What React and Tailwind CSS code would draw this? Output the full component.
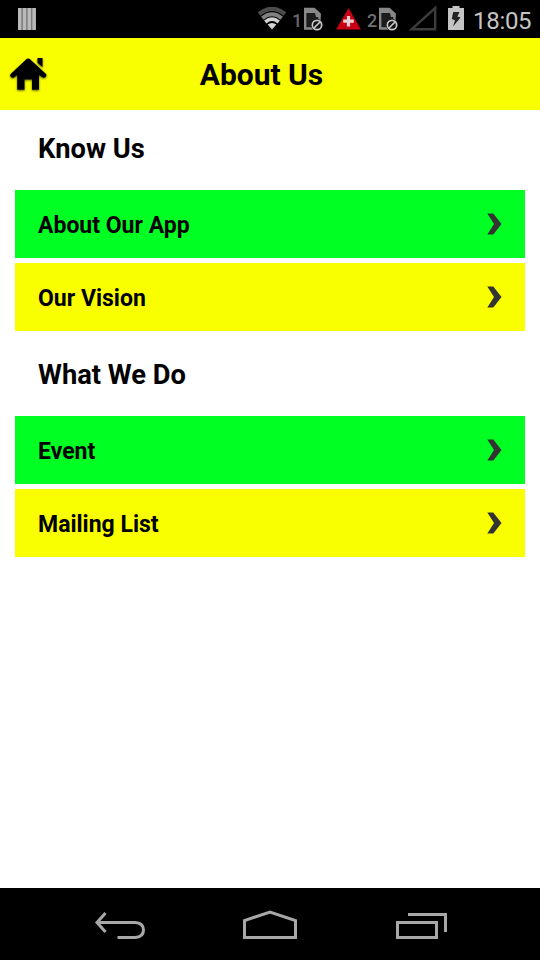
import React from 'react';

const sections = [
  { title: 'Know Us', items: ['About Our App', 'Our Vision'] },
  { title: 'What We Do', items: ['Event', 'Mailing List'] },
];

const SimIcon = ({ className }) => (
  <svg viewBox="0 0 20 24" className={`h-6 w-5 ${className}`}>
    <path d="M2.2 21.5V2H11L16.5 7V21.5Z" fill="#1c1c1c" stroke="#888" strokeWidth="2.4" />
    <path d="M1 1H11.5L17.5 6.5V10H13L12 6H1Z" fill="#888" />
    <circle cx="14" cy="18" r="6" fill="#000" />
    <circle cx="14" cy="18" r="4.7" fill="#111" stroke="#c8c8c8" strokeWidth="1.7" />
    <path d="M11 21L17 15" stroke="#c8c8c8" strokeWidth="1.7" />
  </svg>
);

const StatusBar = () => (
  <div className="flex h-[38px] items-start bg-black">
    <svg viewBox="0 0 18 22" className="mt-2 ml-[18px] h-[22px] w-[18px]">
      <rect width="18" height="22" fill="#777" />
      <path d="M1.7 0V22M6.5 0V22M11.3 0V22M16.1 0V22" stroke="#bababa" strokeWidth="3.4" />
    </svg>

    <svg viewBox="0 0 30 23" className="mt-[7px] ml-[221px] h-[23px] w-[30px]" fill="none">
      <path d="M2 7Q15 -3.5 28 7" stroke="#4c4c4c" strokeWidth="4.2" />
      <path d="M5.3 11.2Q15 3.4 24.7 11.2" stroke="#808080" strokeWidth="4" />
      <path d="M8.3 15Q15 9.4 21.7 15" stroke="#d0d0d0" strokeWidth="3.6" />
      <path d="M10.6 17.6Q15 14.2 19.4 17.6L15 22.6Z" fill="#d4d4d4" />
    </svg>
    <span className="mt-[10px] ml-[5px] w-[11px] text-[18px] leading-[22px] font-medium text-[#686868]">1</span>
    <SimIcon className="mt-[7px] ml-0" />
    <svg viewBox="0 0 25 22" className="mt-2 ml-[13px] h-[22px] w-[25px]">
      <path d="M12.5 0L25 21.5H0Z" fill="#c80014" />
      <path d="M12.5 8V18.4M7.2 13.2H17.8" stroke="#e4d4d4" strokeWidth="3.2" />
    </svg>
    <span className="mt-[10px] ml-[6px] w-[11px] text-[18px] leading-[22px] font-medium text-[#707070]">2</span>
    <SimIcon className="mt-[7px] ml-0" />
    <svg viewBox="0 0 28 26" className="mt-[5px] ml-[11px] h-[26px] w-7" fill="none">
      <path d="M2.8 24.2H26.2V3Z" stroke="#3c3c3c" strokeWidth="2.4" />
    </svg>
    <svg viewBox="0 0 16 24" className="mt-1.5 ml-[11px] h-6 w-4">
      <path d="M4.5 0H11.5V2H16V24H0V2H4.5Z" fill="#c4c4c4" />
      <path d="M5.2 6H11.5L9.4 10.5L12.6 11.4L5 20.5L7 14.2L3.8 13Z" fill="#222" />
    </svg>
    <span className="mt-[7px] ml-[9px] text-[24px] leading-7 tracking-[-0.3px] text-[#c4c4c4]">18:05</span>
  </div>
);

const Header = () => (
  <header className="grid h-[72px] grid-cols-[60px_1fr_77px] items-center bg-[#faff00]">
    <svg viewBox="0 0 37 34" className="mt-0.5 ml-[10px] h-[34px] w-[37px] drop-shadow-[0_1px_1px_rgba(0,0,0,0.6)]">
      <path
        d="M16.4 1.2Q18.2-.2 20 1.2L35.8 15.8Q37 17.4 35.8 18.7T32.7 19.6L29 17V31.8H22V21.5H14.5V31.8H7.2V17L4 19.6Q1.8 20.2.7 18.7T.9 15.8Z"
        fill="#000"
      />
      <path d="M27.5 0H32.5V9.3L27.5 4.8Z" fill="#000" />
    </svg>
    <h1 className="pt-0.5 text-center text-[30px] leading-9 font-bold">About Us</h1>
  </header>
);

const Row = ({ label, green }) => (
  <button
    className={`flex h-[68px] w-full items-center justify-between pr-[23px] pl-[23px] ${
      green ? 'bg-[#00ff22]' : 'bg-[#faff00]'
    }`}
  >
    <span className="pt-1 text-[23px] leading-7 font-bold">{label}</span>
    <svg viewBox="0 0 15 22" className="h-[22px] w-[15px]">
      <path d="M.3 .5H6.3L14.5 11L6.3 21.5H.3L7 11Z" fill="#333" />
    </svg>
  </button>
);

const NavBar = () => (
  <nav className="flex h-[72px] items-start bg-black">
    <svg viewBox="0 0 52 28" className="mt-6 ml-[94px] h-7 w-[52px]" fill="none" stroke="#a8a8a8" strokeWidth="3">
      <path d="M3 10.5H41Q49.5 11 49.5 18T41 25.5H23.5" />
      <path d="M11.5 1L3 10.5L11.5 20" />
    </svg>
    <svg viewBox="0 0 54 30" className="mt-[22px] ml-[97px] h-[30px] w-[54px]" fill="none" stroke="#a8a8a8" strokeWidth="3">
      <path d="M1.5 27.5V10.5L27 2L52.5 10.5V27.5Z" />
    </svg>
    <svg viewBox="0 0 52 28" className="mt-6 ml-[99px] h-7 w-[52px]" fill="none" stroke="#a8a8a8" strokeWidth="3">
      <path d="M1.5 10.5H40.5V25.5H1.5Z" />
      <path d="M12 2.5H49.5V20" />
    </svg>
  </nav>
);

const App = () => {
  return (
    <div className="flex h-screen w-full flex-col overflow-hidden bg-white font-['Roboto',sans-serif] text-black">
      <StatusBar />
      <Header />
      <main className="flex-1 px-[15px]">
        {sections.map((section) => (
          <section key={section.title}>
            <h2 className="flex h-20 items-center pb-0.5 pl-[23px] text-[27.3px] leading-8 font-bold">{section.title}</h2>
            <div className="mb-[5px] space-y-[5px]">
              {section.items.map((item, i) => (
                <Row key={item} label={item} green={i === 0} />
              ))}
            </div>
          </section>
        ))}
      </main>
      <NavBar />
    </div>
  );
};

export default App;
